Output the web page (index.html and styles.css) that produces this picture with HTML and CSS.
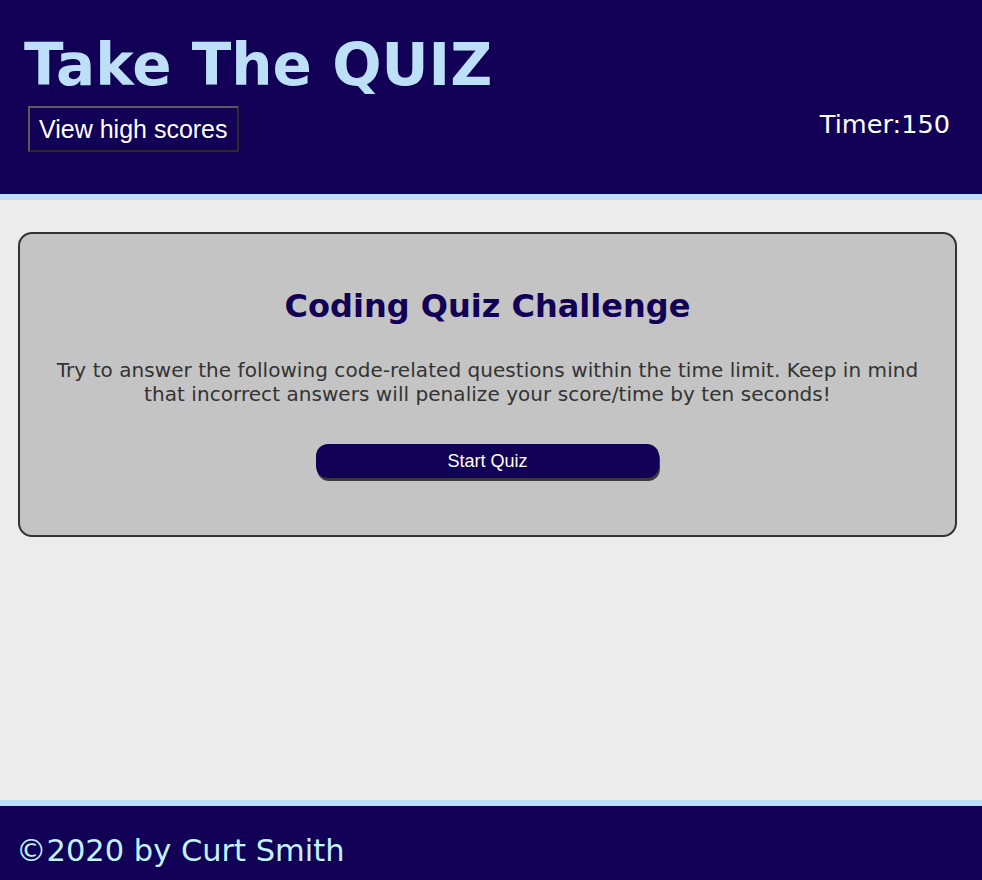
FILE: index.html
```html
<!DOCTYPE html>
<html lang="en">
<head>
<meta charset="utf-8">
<title>Take The QUIZ</title>
<link rel="stylesheet" href="styles.css">
</head>
<body>
<div class="page">
  <header class="header">
    <div class="header-left">
      <h1 class="title">Take The QUIZ</h1>
      <button class="scores-btn">View high scores</button>
    </div>
    <div class="timer">Timer:150</div>
  </header>
  <main class="main">
    <section class="card">
      <h2 class="card-title">Coding Quiz Challenge</h2>
      <p class="card-text">Try to answer the following code-related questions within the time limit. Keep in mind that incorrect answers will penalize your score/time by ten seconds!</p>
      <button class="start-btn">Start Quiz</button>
    </section>
  </main>
  <footer class="footer">©2020 by Curt Smith</footer>
</div>
</body>
</html>
```
FILE: styles.css
```css
* { box-sizing: border-box; }
html, body { margin: 0; padding: 0; }
body {
  background: #ececec;
  font-family: "DejaVu Sans", Verdana, sans-serif;
}
.page {
  display: flex;
  flex-direction: column;
  min-height: 880px;
}
.header {
  background: #120056;
  height: 200px;
  border-bottom: 6px solid #bddff7;
  display: flex;
  justify-content: space-between;
  align-items: flex-start;
  padding: 0 32px 0 24px;
}
.header-left {
  display: flex;
  flex-direction: column;
  align-items: flex-start;
}
.title {
  margin: 30px 0 0 0;
  font-size: 58px;
  line-height: 70px;
  font-weight: bold;
  color: #bddff7;
}
.scores-btn {
  margin: 6px 0 0 4px;
  background: #120056;
  color: #ffffff;
  font-family: "Liberation Sans", Arial, sans-serif;
  font-size: 25px;
  height: 46px;
  padding: 0 9px;
  border: 2px solid;
  border-color: #5a5a5a #2a2a2a #2a2a2a #5a5a5a;
}
.timer {
  margin-top: 109px;
  color: #ffffff;
  font-size: 25.6px;
  line-height: 30px;
}
.main {
  flex: 1;
  padding: 32px 25px 0 18px;
}
.card {
  background: #c4c4c4;
  border: 2px solid #333333;
  border-radius: 14px;
  height: 305px;
  display: flex;
  flex-direction: column;
  align-items: center;
  padding: 52px 28px 0;
}
.card-title {
  margin: 0;
  color: #120056;
  font-size: 32px;
  line-height: 40px;
  font-weight: bold;
}
.card-text {
  margin: 32px 0 0;
  color: #333333;
  font-size: 20px;
  line-height: 24px;
  letter-spacing: 0.05px;
  text-align: center;
}
.start-btn {
  margin-top: 38px;
  width: 343px;
  height: 34px;
  background: #120056;
  color: #ffffff;
  font-family: "Liberation Sans", Arial, sans-serif;
  font-size: 18px;
  border: none;
  border-radius: 12px;
  box-shadow: 1px 3px 0 #3a3a3a;
}
.footer {
  background: #120056;
  border-top: 6px solid #bddff7;
  height: 80px;
  padding: 26px 16px 0;
  color: #c2f3ff;
  font-size: 30.5px;
  line-height: 38px;
}
```
